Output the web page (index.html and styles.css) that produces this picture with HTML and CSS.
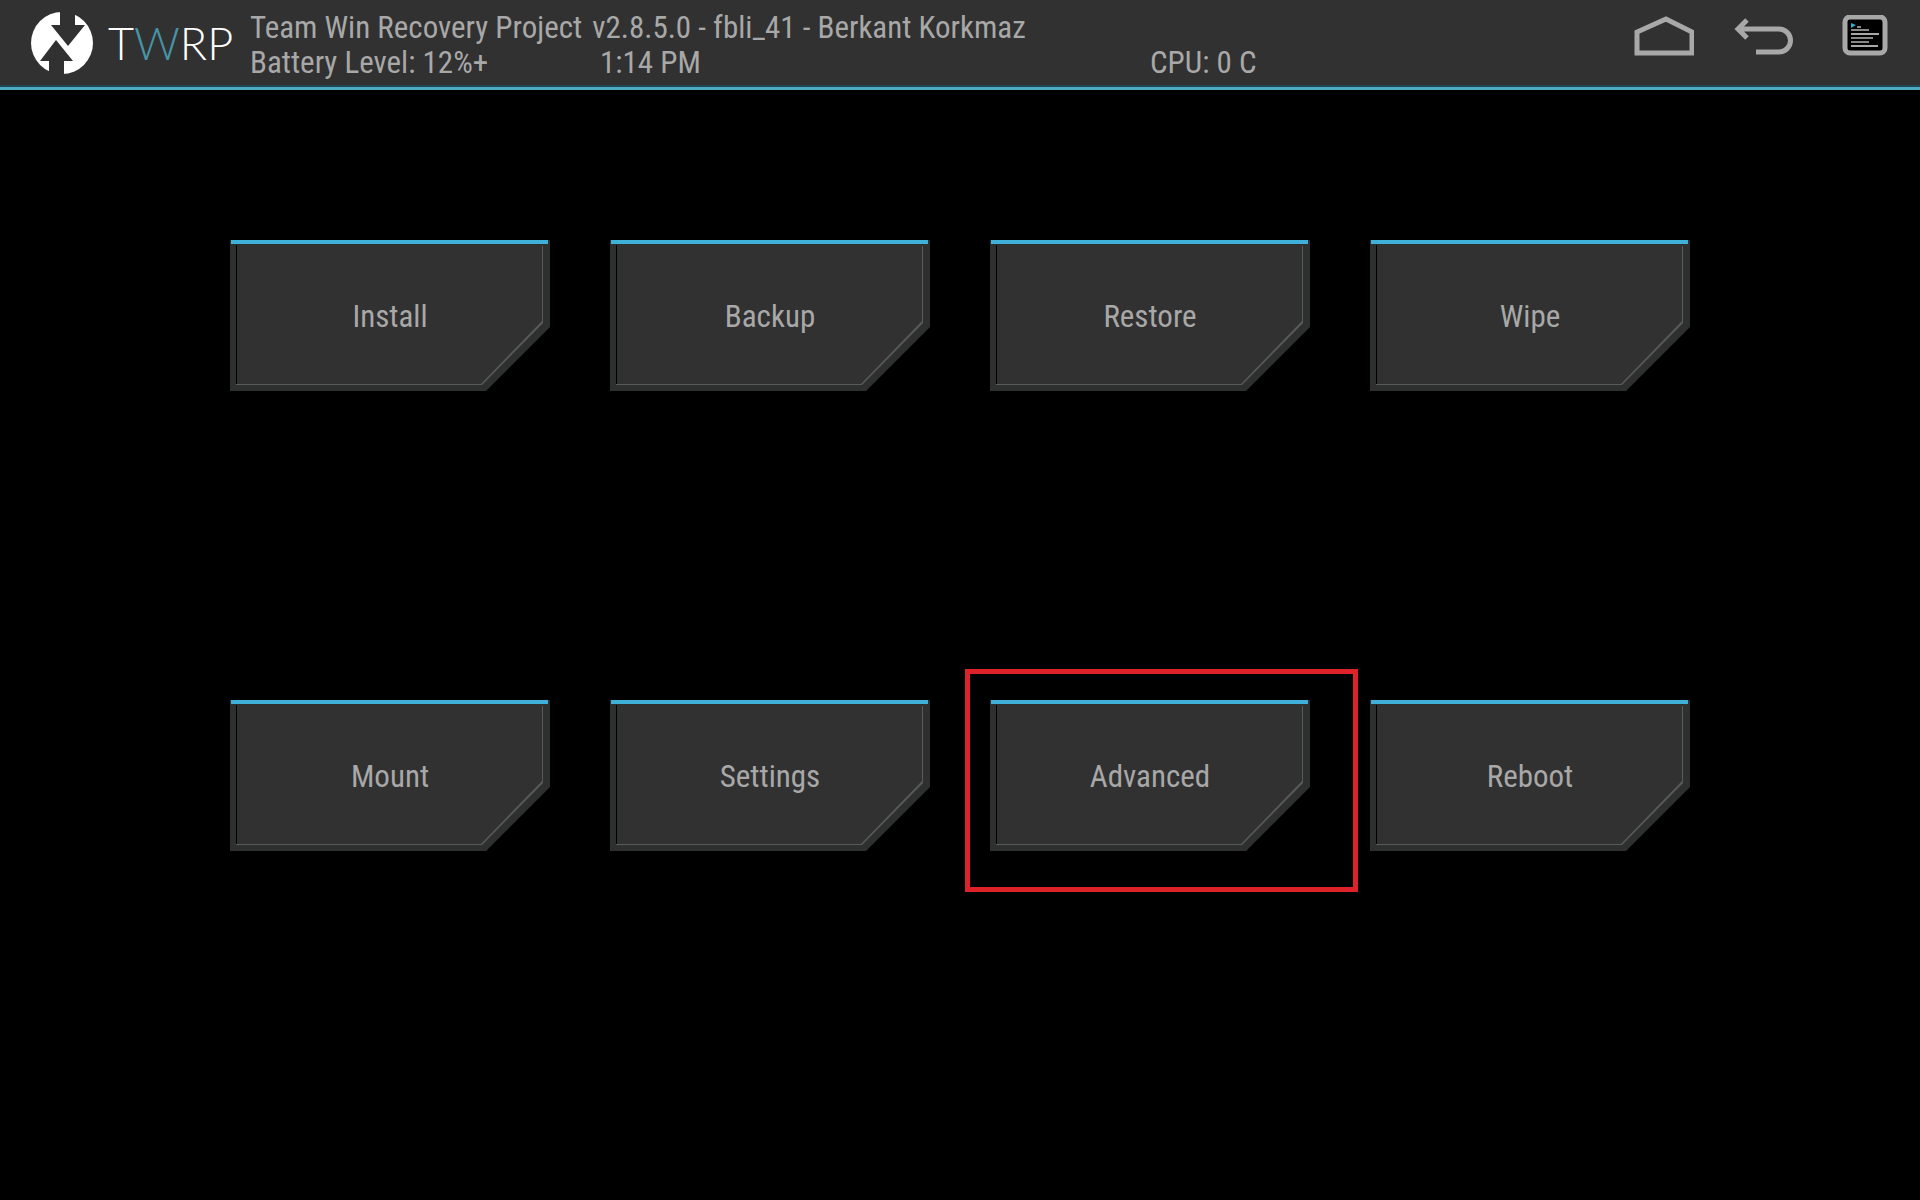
FILE: index.html
```html
<!DOCTYPE html>
<html lang="en">
<head>
    <meta charset="UTF-8">
    <meta name="viewport" content="width=device-width, initial-scale=1.0">
    <title>TWRP</title>
    <link rel="stylesheet" href="styles.css">
</head>
<body>

    <!-- Header -->
    <header class="header">
        <div class="logo">
            <svg class="logo-mark" viewBox="0 0 62 62" aria-hidden="true">
                <circle cx="31" cy="31" r="31" fill="#ffffff"/>
                <path d="M29 -2 V13 H20 L37 34 L54 13 H44 V-2 Z" fill="#313131"/>
                <path d="M18 64 V49 H9 L25 28 L42 49 H33 V64 Z" fill="#313131"/>
            </svg>
            <span class="logo-text">T<span class="logo-accent">W</span>RP</span>
        </div>

        <div class="status">
            <div class="status-row">
                <span>Team Win Recovery Project</span>
                <span>v2.8.5.0 - fbli_41 - Berkant Korkmaz</span>
            </div>
            <div class="status-row status-info">
                <span>Battery Level: 12%+</span>
                <span>1:14 PM</span>
                <span>CPU: 0 C</span>
            </div>
        </div>

        <nav class="nav">
            <div class="nav-group">
                <button type="button" class="nav-button" aria-label="Home">
                    <svg width="60" height="40" viewBox="0 0 60 40">
                        <path d="M3 37 V16 L32 3 L58 16 V37 Z" fill="none" stroke="#a8a8a8" stroke-width="5"/>
                    </svg>
                </button>
                <button type="button" class="nav-button" aria-label="Back">
                    <svg width="60" height="40" viewBox="0 0 60 40">
                        <path d="M4 13 H45 A11 11 0 0 1 45 36 H22 M13 4 L4 13 L13 22" fill="none" stroke="#a8a8a8" stroke-width="5"/>
                    </svg>
                </button>
            </div>
            <button type="button" class="nav-button" aria-label="Console">
                <svg width="46" height="41" viewBox="0 0 46 41">
                    <rect x="3" y="2" width="40" height="36" rx="5" fill="#000000" stroke="#a8a8a8" stroke-width="5"/>
                    <path d="M9 8 L14 10 L9 13 Z" fill="#35a8d0"/>
                    <path d="M15 12 H19 M9 15 H27 M9 23 H31 M9 27 H27" stroke="#888888" stroke-width="2"/>
                    <path d="M9 19 H37 M9 31 H36" stroke="#a8a8a8" stroke-width="2"/>
                </svg>
            </button>
        </nav>
    </header>

    <!-- Main menu -->
    <main class="menu">
        <button type="button" class="tile">Install</button>
        <button type="button" class="tile">Backup</button>
        <button type="button" class="tile">Restore</button>
        <button type="button" class="tile">Wipe</button>
        <button type="button" class="tile">Mount</button>
        <button type="button" class="tile">Settings</button>
        <div class="marked">
            <button type="button" class="tile">Advanced</button>
        </div>
        <button type="button" class="tile">Reboot</button>
    </main>

</body>
</html>
```

FILE: styles.css
```css
/* Default styles */
* {
    box-sizing: border-box;
}

body {
    margin: 0;
    min-height: 100vh;
    background-color: #000000;
    color: #a8a8a8;
    font-family: "Roboto Condensed", "Liberation Sans Narrow", Roboto, sans-serif;
    font-size: 31px;
    line-height: 35px;
}

button {
    padding: 0;
    border: none;
    background: none;
    color: inherit;
    font: inherit;
    cursor: pointer;
}

/* Header styles */
.header {
    display: flex;
    align-items: flex-start;
    height: 90px;
    padding: 0 32px 0 31px;
    background-color: #313131;
    border-bottom: 3px solid #4fabc4;
    box-shadow: inset 0 -2px #1f4454;
}

.logo {
    display: flex;
    align-items: center;
    gap: 15px;
    width: 219px;
    padding-top: 12px;
}

.logo-mark {
    width: 62px;
    height: 62px;
}

.logo-text {
    color: #ffffff;
    font-family: Lato, sans-serif;
    font-size: 45px;
    font-weight: 300;
}

.logo-accent {
    color: #4795a8;
}

.status {
    flex: 1;
    padding-top: 10px;
}

.status-row {
    display: flex;
    gap: 10px;
    white-space: nowrap;
}

.status-info {
    display: grid;
    grid-template-columns: 350px 550px auto;
    gap: 0;
}

.nav {
    display: flex;
    gap: 48px;
    padding-top: 15px;
}

.nav-group {
    display: flex;
    gap: 40px;
}

.nav-button svg {
    display: block;
}

/* Main menu */
.menu {
    display: grid;
    grid-template-columns: repeat(4, 1fr);
    column-gap: 60px;
    row-gap: 309px;
    max-width: 1460px;
    margin: 150px auto 0;
}

/* Tile with a cut corner */
.tile {
    position: relative;
    z-index: 0;
    width: 100%;
    height: 151px;
    padding-top: 2px;
    background-color: #2e3030;
    clip-path: polygon(0 0, 100% 0, 100% 87px, calc(100% - 64px) 100%, 0 100%);
}

/* Blue line on top, thin outline inside */
.tile::before {
    content: "";
    position: absolute;
    z-index: -2;
    inset: 0;
    border-top: 4px solid #3fb0d8;
    background-color: #5a5a5a;
    background-clip: content-box;
    padding: 2px 7px 6px 6px;
    clip-path: polygon(1px 0, calc(100% - 2px) 0, calc(100% - 2px) 4px, calc(100% - 7px) 4px, calc(100% - 7px) 83px, calc(100% - 68px) calc(100% - 6px), 1px calc(100% - 6px));
}

.tile::after {
    content: "";
    position: absolute;
    z-index: -1;
    inset: 5px 8px 7px 6px;
    border-left: 1px solid #000000;
    background-color: #313131;
    clip-path: polygon(0 0, 100% 0, 100% 76px, calc(100% - 61px) 100%, 0 100%);
}

/* Red frame around a tile */
.marked {
    position: relative;
}

.marked::after {
    content: "";
    position: absolute;
    inset: -31px -48px -41px -25px;
    border: 5px solid #dd2229;
    pointer-events: none;
}
```
